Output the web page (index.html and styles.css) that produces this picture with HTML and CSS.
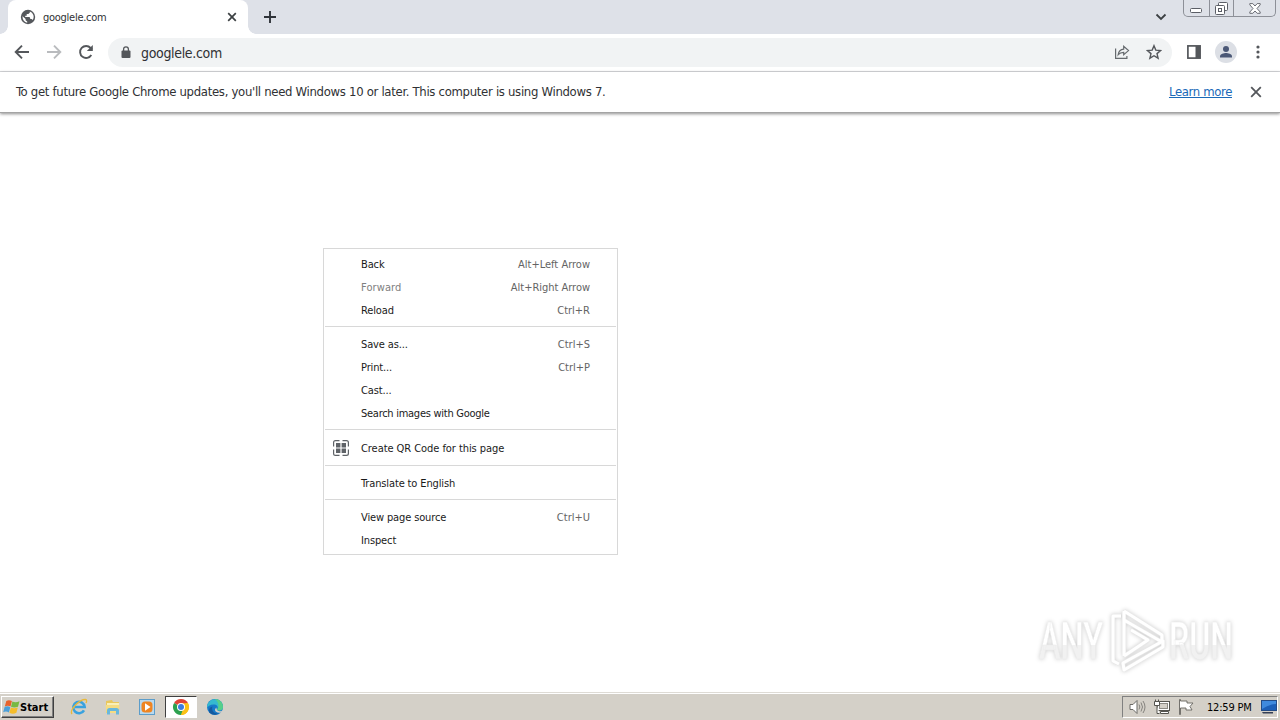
FILE: index.html
```html
<!DOCTYPE html>
<html lang="en">
<head>
    <meta charset="utf-8">
    <title>googlele.com</title>
    <meta name="viewport" content="width=device-width, initial-scale=1">
    <link rel="stylesheet" href="styles.css">
</head>
<body>
    <header class="tabstrip">
        <div class="tab">
            <svg class="favicon" width="16" height="16" viewBox="0 0 16 16">
                <circle cx="8" cy="8" r="7.2" fill="#55585c"/>
                <path d="M2.6 7.2 5.6 10v1.2l1.6 1.2v1.4A6 6 0 0 1 2.6 7.2zM9.8 2.5v1.3L8.3 5.1H6.7v1.6H5.2v1.2h4.4l.8 2.2h1.3l1 1A5.8 5.8 0 0 0 9.8 2.5z" fill="#fff"/>
            </svg>
            <span class="tab-title">googlele.com</span>
            <svg class="tab-close" width="10" height="10" viewBox="0 0 10 10"><path d="M1.2 1.2l7.6 7.6M8.8 1.2L1.2 8.8" stroke="#3c4043" stroke-width="1.7"/></svg>
        </div>
        <svg class="new-tab" width="14" height="14" viewBox="0 0 14 14"><path d="M7 1v12M1 7h12" stroke="#30343a" stroke-width="1.9"/></svg>
        <svg class="tab-search" width="12" height="12" viewBox="0 0 12 12"><path d="M1.5 3.5L6 8l4.5-4.5" fill="none" stroke="#3c4043" stroke-width="1.8"/></svg>
        <div class="caption">
            <span class="cap-btn cap-min"><svg width="13" height="6" viewBox="0 0 13 6"><rect x=".5" y=".5" width="11" height="4" rx="1" fill="#fff" stroke="#5b5e66"/></svg></span>
            <span class="cap-btn cap-max"><svg width="13" height="13" viewBox="0 0 13 13"><g fill="#fff" stroke="#5b5e66"><rect x="3.5" y=".5" width="9" height="8" rx="1"/><rect x=".5" y="3.5" width="9" height="9" rx="1"/><rect x="3.5" y="6.5" width="3" height="3"/></g></svg></span>
            <span class="cap-btn cap-close"><svg width="12" height="11" viewBox="0 0 12 11"><path d="M.8.6h3L6 3 8.2.6h3v1.2L8 5.5l3.2 3.5v1.3h-3L6 8 3.8 10.3h-3V9L4 5.5.8 1.8z" fill="#fff" stroke="#5b5e66" stroke-width=".9"/></svg></span>
        </div>
    </header>

    <nav class="toolbar">
        <svg class="nav-icon" width="16" height="16" viewBox="0 0 16 16"><path d="M15 8H2M8 1.7L1.7 8 8 14.3" fill="none" stroke="#54575b" stroke-width="1.9"/></svg>
        <svg class="nav-icon" width="16" height="16" viewBox="0 0 16 16"><path d="M1 8h13M8 1.7L14.3 8 8 14.3" fill="none" stroke="#b9bbbe" stroke-width="1.9"/></svg>
        <svg class="nav-icon" width="16" height="16" viewBox="0 0 16 16"><path d="M13.3 11A6 6 0 1 1 12.6 4L14 5.5" fill="none" stroke="#54575b" stroke-width="1.9"/><path d="M14.8 1v6H8.8z" fill="#54575b"/></svg>
        <div class="omnibox">
            <svg class="lock" width="10" height="13" viewBox="0 0 10 13"><rect x=".5" y="4.5" width="9" height="7.5" rx="1" fill="#54575b"/><path d="M2.6 5V3.2a2.4 2.4 0 0 1 4.8 0V5" fill="none" stroke="#54575b" stroke-width="1.3"/></svg>
            <span class="url">googlele.com</span>
            <svg class="share" width="16" height="16" viewBox="0 0 16 16" fill="none" stroke="#666a6e" stroke-width="1.2"><path d="M1.6 4.5v9.9h11.3V12"/><path d="M4.2 10.7C4.7 7 6.8 5.4 9.7 5.2V2.4L14.5 6.6l-4.8 4.2V8.3C7.3 8.3 5.6 9 4.2 10.7z"/></svg>
            <svg class="star" width="16" height="16" viewBox="0 0 16 16"><path d="M8 1.7l1.8 4.4 4.8.4-3.6 3.1 1.1 4.6L8 11.7l-4.1 2.5L5 9.6 1.4 6.5l4.8-.4z" fill="none" stroke="#54575b" stroke-width="1.4"/></svg>
        </div>
        <svg class="side-panel" width="14" height="14" viewBox="0 0 14 14"><rect x=".9" y=".9" width="12.2" height="12.2" fill="#fff" stroke="#54575b" stroke-width="1.7"/><path d="M8.5 1H13v12H8.5z" fill="#54575b"/></svg>
        <svg class="avatar" width="22" height="22" viewBox="0 0 22 22"><circle cx="11" cy="11" r="11" fill="#dcdfe5"/><circle cx="11" cy="8" r="3" fill="#4b5876"/><path d="M5 16.5v-1.3c0-2.2 4-3.2 6-3.2s6 1 6 3.2v1.3z" fill="#4b5876"/></svg>
        <svg class="dots" width="4" height="14" viewBox="0 0 4 14" fill="#54575b"><circle cx="2" cy="2" r="1.6"/><circle cx="2" cy="7" r="1.6"/><circle cx="2" cy="12" r="1.6"/></svg>
    </nav>

    <div class="infobar">
        <span class="info-text">To get future Google Chrome updates, you'll need Windows 10 or later. This computer is using Windows 7.</span>
        <a class="info-link">Learn more</a>
        <svg class="info-close" width="12" height="12" viewBox="0 0 12 12"><path d="M1.2 1.2l9.6 9.6M10.8 1.2l-9.6 9.6" stroke="#54575b" stroke-width="1.8"/></svg>
    </div>

    <main class="page">
        <svg class="watermark" width="200" height="66" viewBox="0 0 200 66">
            <defs>
                <linearGradient id="shade" x1="0" y1="0" x2="0" y2="1">
                    <stop offset=".55" stop-color="#fff"/>
                    <stop offset=".55" stop-color="#f1f1f1"/>
                </linearGradient>
            </defs>
            <text class="mark-text" x="2" y="52" textLength="64" lengthAdjust="spacingAndGlyphs">ANY</text>
            <g transform="translate(70 0)" fill="none" stroke-linejoin="round">
                <path class="mark-edge" d="M14 9H6v45l6 3M17 4v45M17 4l38 24v7L17 13M17 49l24-16-17-10M16 56l40-22v6L17 63z"/>
                <path class="mark-line" d="M14 9H6v45l6 3M17 4v45M17 4l38 24v7L17 13M17 49l24-16-17-10M16 56l40-22v6L17 63z"/>
            </g>
            <text class="mark-text" x="132" y="52" textLength="64" lengthAdjust="spacingAndGlyphs">RUN</text>
        </svg>
    </main>

    <div class="menu">
        <div class="item"><span>Back</span><kbd>Alt+Left Arrow</kbd></div>
        <div class="item disabled"><span>Forward</span><kbd>Alt+Right Arrow</kbd></div>
        <div class="item"><span>Reload</span><kbd>Ctrl+R</kbd></div>
        <hr>
        <div class="item"><span>Save as...</span><kbd>Ctrl+S</kbd></div>
        <div class="item"><span>Print...</span><kbd>Ctrl+P</kbd></div>
        <div class="item"><span>Cast...</span></div>
        <div class="item tight"><span>Search images with Google</span></div>
        <hr>
        <div class="item qr">
            <svg width="16" height="16" viewBox="0 0 16 16"><path d="M6.5.6h-4Q.6.6.6 2.5v4M9.5.6h4q1.900 0 1.900 1.900v4M6.5 15.400h-4Q.6 15.400.6 13.500v-4M9.500 15.400h4q1.900 0 1.900-1.900v-4" fill="none" stroke="#5f6368" stroke-width="1.2"/><path d="M3 3h4.400v4.400H3zM8.600 3H13v4.400H8.600zM3 8.600h4.400V13H3zM8.600 8.600H13V13H8.600z" fill="#5f6368"/></svg>
            <span>Create QR Code for this page</span>
        </div>
        <hr>
        <div class="item"><span>Translate to English</span></div>
        <hr>
        <div class="item"><span>View page source</span><kbd>Ctrl+U</kbd></div>
        <div class="item"><span>Inspect</span></div>
    </div>

    <footer class="taskbar">
        <div class="start">
            <svg width="17" height="16" viewBox="0 0 17 16">
                <path d="M3.3 2Q6 .3 8.900 2.100L7.500 7.500Q4.700 5.900 1.800 7.500z" fill="#e8622c"/>
                <path d="M9.400 2.500Q12.600 4 16.500 2.200L15 7.700Q11.300 9.200 8 7.800z" fill="#78b943"/>
                <path d="M1.600 8.100Q4.500 6.600 7.300 8.200L5.900 13.400Q3 11.900.2 13.300z" fill="#4b9fd9"/>
                <path d="M7.900 8.500Q11.300 9.900 14.800 8.400L13.400 13.800Q9.800 15.500 6.400 13.800z" fill="#f5bd2b"/>
            </svg>
            <span>Start</span>
        </div>
        <div class="launch">
            <svg width="18" height="18" viewBox="0 0 18 18"><path d="M14 12.300A5.700 5.700 0 1 1 14.700 9H5" fill="none" stroke="#39a2df" stroke-width="2.600"/><path d="M2 16C-1 12 10 1 15.500 1.500c1.500.2 1.300 2 .5 3.500" fill="none" stroke="#e9b93a" stroke-width="1.300"/></svg>
        </div>
        <div class="launch">
            <svg width="18" height="18" viewBox="0 0 18 18"><path d="M2 3l6-1 1 2h6v11H2z" fill="#e9c75c"/><path d="M3 5h12v4H3z" fill="#f9efb8"/><path d="M1.500 7h14l-.8 8H2.500z" fill="#f5dc83"/><path d="M3 16.500V12.500q0-2.500 2.500-2.500h7q2.500 0 2.500 2.500v4h-3v-3.500H6v3.500z" fill="#69b7dc"/></svg>
        </div>
        <div class="launch">
            <svg width="18" height="18" viewBox="0 0 18 18"><rect x="1.500" y="1.500" width="15" height="15" fill="#b9d9ee" stroke="#5c9dca"/><rect x="3.500" y="3.500" width="11" height="11" rx="3.500" fill="#ef8522"/><path d="M7 5.300L12.500 9 7 12.700z" fill="#fff"/></svg>
        </div>
        <div class="launch active">
            <svg width="18" height="18" viewBox="0 0 18 18"><path d="M9 9L2.070 5A8 8 0 0 1 15.930 5z" fill="#e04436"/><path d="M9 9L15.930 5A8 8 0 0 1 9 17z" fill="#fbc116"/><path d="M9 9v8A8 8 0 0 1 2.070 5z" fill="#2da14f"/><path d="M9 5.200h7l-3.700 5.700L9 9z" fill="#fbc116"/><path d="M12.300 10.900L9 17 5.700 10.900 9 9z" fill="#2da14f"/><path d="M10.500 12.500L12.500 10l1-4.500 2.400-.5A8 8 0 0 1 9 17z" fill="#fbc116"/><circle cx="9" cy="9" r="4" fill="#fff"/><circle cx="9" cy="9" r="3" fill="#3c7de0"/></svg>
        </div>
        <div class="launch">
            <svg width="18" height="18" viewBox="0 0 18 18"><circle cx="9" cy="9" r="8" fill="#1679c9"/><path d="M1.300 7A8 8 0 0 1 17 9c0 3-3 4-6 3 1.500-2 1-5-2.500-5.500C5 6 2.500 7.500 1.100 9.500z" fill="#35b9cf"/><path d="M9 1a8 8 0 0 1 8 8c0 3-3 4-6 3 2-3 2.500-7-2-11z" fill="#57cf8a"/><path d="M6.500 8.500c-1.500 4 1.500 7.500 6 7A8 8 0 0 1 3.500 14.800C2 11.500 4 9 6.500 8.500z" fill="#155a9f"/><path d="M10.500 9.500q-.5 3 3 3.700 2 .2 2.800-.7l-1 2q-3 1-5.600-1Q8 11.500 10.500 9.500z" fill="#d4d0c8"/></svg>
        </div>
        <div class="tray">
            <svg width="17" height="16" viewBox="0 0 17 16"><path d="M1 5.500h3L8 1.500v13L4 10.500H1z" fill="#fff" stroke="#6b6a66"/><path d="M10 5.500q1.700 2.500 0 5M12 3.500q3 4.500 0 9M14 2q4 6 0 12" fill="none" stroke="#85837e"/></svg>
            <svg width="16" height="16" viewBox="0 0 16 16"><rect x="3.500" y="2.500" width="12" height="9" fill="#fff" stroke="#55544f"/><rect x="5.500" y="4.500" width="8" height="5" fill="#d4d0c8" stroke="#8b8983"/><path d="M6.500 14.500h8v-2h-8z" fill="#fff" stroke="#55544f"/><path d="M1.500.5v2M4.500.5v2M.5 2.500h5v4h-5zM3 6.500v8h2.500" fill="#fff" stroke="#55544f"/></svg>
            <svg width="16" height="16" viewBox="0 0 16 16"><path d="M1.500.5v15h1V9h5.500v2h6L12 7.500 15 4H9V2H2.500V.5z" fill="#fff" stroke="#66645f" stroke-width=".9"/></svg>
            <span class="clock">12:59 PM</span>
            <svg class="desktop" width="16" height="14" viewBox="0 0 16 14"><rect x=".5" y=".5" width="15" height="10" fill="#1c5fb8" stroke="#244c86"/><path d="M1 1h14v3Q8 4 1 9z" fill="#3f8ade"/><path d="M1 12h11v1.500H2z" fill="#343f55"/></svg>
        </div>
    </footer>
</body>
</html>
```
FILE: styles.css
```css
* {
    box-sizing: border-box;
}
body {
    margin: 0;
    width: 1280px;
    height: 720px;
    overflow: hidden;
    display: flex;
    flex-direction: column;
    background-color: #fff;
    color: #303134;
    font-family: Tahoma, "DejaVu Sans Condensed", "Noto Sans", sans-serif;
    font-size: 11px;
}
svg {
    display: block;
    flex: none;
}
span, a, kbd {
    white-space: nowrap;
}

/* tabs */
.tabstrip {
    display: flex;
    height: 34px;
    background-color: #dee1e8;
    padding-left: 8px;
}
.tab {
    display: flex;
    align-items: center;
    width: 240px;
    padding: 0 11px 0 12px;
    background-color: #fff;
    border-radius: 8px 8px 0 0;
    position: relative;
}
.tab::before, .tab::after {
    content: "";
    position: absolute;
    bottom: 0;
    width: 8px;
    height: 8px;
}
.tab::before {
    left: -8px;
    background: radial-gradient(circle at 0 0, transparent 7.5px, #fff 8px);
}
.tab::after {
    right: -8px;
    background: radial-gradient(circle at 100% 0, transparent 7.5px, #fff 8px);
}
.tab-title {
    flex: 1;
    margin-left: 7px;
    letter-spacing: -0.27px;
}
.new-tab {
    margin: 10px 0 0 15px;
}
.tab-search {
    margin: 11px 16px 0 auto;
}
.caption {
    display: flex;
    width: 93px;
    height: 17px;
    margin-right: 4px;
    border: 1px solid #8d9098;
    border-top: none;
    border-radius: 0 0 5px 5px;
}
.cap-btn {
    display: flex;
    justify-content: center;
    align-items: flex-end;
}
.cap-min {
    width: 25px;
    padding-bottom: 2px;
}
.cap-max {
    width: 25px;
    padding-bottom: 1px;
    border-left: 1px solid #8d9098;
    border-right: 1px solid #8d9098;
}
.cap-close {
    flex: 1;
    padding-bottom: 2px;
}

/* toolbar */
.toolbar {
    display: flex;
    align-items: center;
    height: 38px;
    padding: 0 20px 1px 14px;
    border-bottom: 1px solid #d9dadd;
}
.nav-icon {
    margin-right: 16px;
}
.omnibox {
    display: flex;
    align-items: center;
    width: 1064px;
    height: 29px;
    margin-left: -2px;
    padding: 0 10px 0 13px;
    background-color: #f1f3f4;
    border-radius: 15px;
}
.url {
    flex: 1;
    margin-left: 10px;
    padding-top: 1px;
    font-size: 14px;
    letter-spacing: -0.33px;
}
.star {
    margin-left: 16px;
}
.side-panel {
    margin-left: 15px;
}
.avatar {
    margin-left: 14px;
}
.dots {
    margin-left: 19px;
}

/* infobar */
.infobar {
    display: flex;
    align-items: center;
    height: 41px;
    padding: 0 18px 2px 16px;
    border-bottom: 1px solid #a4a4a4;
    box-shadow: 0 1px 3px rgba(0, 0, 0, 0.45);
    font-size: 13px;
}
.info-text {
    flex: 1;
    letter-spacing: -0.31px;
}
.info-link {
    margin-right: 18px;
    color: #1a69b8;
    text-decoration: underline;
    letter-spacing: -0.36px;
}
.info-close {
    margin-top: 2px;
}

/* page */
.page {
    flex: 1;
    display: flex;
    justify-content: flex-end;
    align-items: flex-end;
    padding: 0 43px 19px 0;
}
.watermark {
    overflow: visible;
    filter: drop-shadow(0 0 2px rgba(0, 0, 0, 0.2));
}
.mark-text {
    fill: url(#shade);
    stroke: #ececec;
    stroke-width: 0.5;
    font-family: Roboto, sans-serif;
    font-size: 52px;
    font-weight: 500;
}
.mark-edge {
    stroke: #e9e9e9;
    stroke-width: 4;
}
.mark-line {
    stroke: #fff;
    stroke-width: 3;
}

/* context menu */
.menu {
    position: absolute;
    left: 323px;
    top: 248px;
    width: 295px;
    height: 307px;
    padding: 3px 1px;
    background-color: #fff;
    border: 1px solid #d8d8d8;
}
.menu hr {
    height: 1px;
    margin: 5px 0;
    border: none;
    background-color: #d8d8d8;
}
.item {
    display: flex;
    align-items: center;
    justify-content: space-between;
    height: 23px;
    padding: 0 26px 0 36px;
    color: #1a1a1a;
    letter-spacing: -0.13px;
}
.item span, .item kbd {
    padding-top: 2px;
}
.item kbd {
    font-family: inherit;
    color: #646464;
    letter-spacing: 0;
}
.disabled {
    color: #808080;
    letter-spacing: 0.1px;
}
.disabled kbd {
    letter-spacing: -0.02px;
}
.tight {
    letter-spacing: -0.27px;
}
.qr {
    height: 25px;
    justify-content: flex-start;
    padding-left: 8px;
    gap: 12px;
    letter-spacing: -0.06px;
}

/* taskbar */
.taskbar {
    display: flex;
    align-items: center;
    height: 28px;
    padding: 1px 2px 0 1px;
    background-color: #d4d0c8;
    border-top: 1px solid #dedbd5;
    box-shadow: inset 0 1px #fff;
}
.start {
    display: flex;
    align-items: center;
    width: 53px;
    height: 22px;
    margin-right: 9px;
    padding-left: 1px;
    border: 1px solid;
    border-color: #fff #404040 #404040 #fff;
    box-shadow: inset -1px -1px #808080;
    color: #000;
    font-weight: bold;
}
.launch {
    display: flex;
    align-items: center;
    justify-content: center;
    width: 32px;
    height: 22px;
    margin-right: 2px;
}
.active {
    background-color: #fff;
    border: 1px solid;
    border-color: #404040 #fff #fff #404040;
}
.tray {
    display: flex;
    align-items: center;
    width: 156px;
    height: 22px;
    margin-left: auto;
    padding-left: 6px;
    gap: 8px;
    border: 1px solid;
    border-color: #808080 #fff #fff #808080;
    color: #000;
}
.clock {
    width: 47px;
    margin-left: 5px;
    letter-spacing: -0.2px;
}
```
